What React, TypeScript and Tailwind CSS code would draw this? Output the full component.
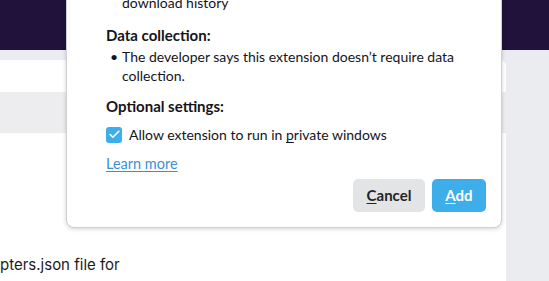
import { Check } from "lucide-react";

const App = () => {
    return (
        <div
            className="relative flex h-[281px] w-[549px] flex-col overflow-hidden bg-white text-[#15141a]"
            style={{ fontFamily: "Lato, 'Noto Sans', sans-serif" }}
        >
            {/* Browser header */}
            <div className="h-[50px] shrink-0 bg-[#20123a]" />

            {/* Page behind the dialog */}
            <div className="flex flex-1 bg-[#eaecf0] pt-[10px] pr-[43px]">
                <div className="flex flex-1 flex-col rounded-tr-md bg-white">
                    <div className="mt-[32px] h-[41px] bg-[#ededf0]" />
                    <p
                        className="mt-auto mb-[6px] text-[15px] leading-[20px] text-[#1c1b22]"
                        style={{ fontFamily: "Inter, sans-serif" }}
                    >
                        pters.json file for
                    </p>
                </div>
            </div>

            {/* Permissions dialog */}
            <div className="absolute bottom-[53px] left-[66px] w-[436px] rounded-b-lg border border-[#cfcfd4] bg-white pl-[39px] pr-[15px] pb-[15px] shadow-[0_1px_4px_rgba(0,0,0,0.18)] text-[14px] leading-[19px]">
                <div className="pl-[16px]">download history</div>

                <h4 className="mt-[14px] text-[15px] font-bold">Data collection:</h4>
                <ul className="mt-[2px]">
                    <li className="flex">
                        <span className="w-[16px] shrink-0 pl-[4px]">•</span>
                        <span className="pr-[30px]">
                            The developer says this extension doesn’t require data collection.
                        </span>
                    </li>
                </ul>

                <h4 className="mt-[12px] text-[15px] font-bold">Optional settings:</h4>
                <label className="mt-[9px] flex items-center gap-[7px]">
                    <span className="flex h-[16px] w-[16px] items-center justify-center rounded-[3px] bg-[#3daee9]">
                        <Check className="h-[13px] w-[13px] text-white" strokeWidth={3} />
                    </span>
                    <span>
                        Allow extension to run in <span className="underline underline-offset-2">p</span>rivate windows
                    </span>
                </label>

                <a className="mt-[10px] block w-fit text-[14.5px] text-[#3d8fd1] underline underline-offset-2">
                    Learn more
                </a>

                <div className="mt-[6px] flex justify-end gap-[7px]">
                    <button className="h-[33px] w-[72px] rounded-[5px] bg-[#e3e4e5] text-[15px] font-bold text-[#232629]">
                        <span className="underline underline-offset-2">C</span>ancel
                    </button>
                    <button className="h-[33px] w-[54px] rounded-[5px] bg-[#3daee9] text-[15px] font-bold text-white">
                        <span className="underline underline-offset-2">A</span>dd
                    </button>
                </div>
            </div>
        </div>
    );
};

export default App;
